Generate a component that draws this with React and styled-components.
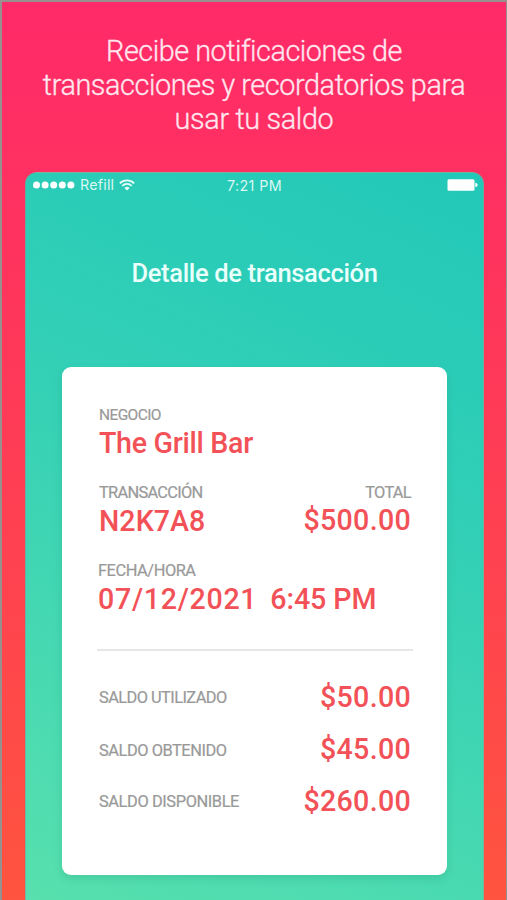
import React from "react";
import styled, { createGlobalStyle } from "styled-components";

const GlobalStyle = createGlobalStyle`
  * { box-sizing: border-box; }
  body { margin: 0; background: #ff5440; }
`;

const Screen = styled.main`
  display: flex;
  flex-direction: column;
  height: 900px;
  overflow: hidden;
  padding: 32px 22px 0 23px;
  border: solid #98908f;
  border-width: 2px 1px 0 2px;
  background: linear-gradient(180deg, #ff2a69 0%, #ff345d 30%, #ff434f 65%, #ff543f 100%);
  font-family: Roboto, "Noto Sans", sans-serif;
`;

const Headline = styled.h1`
  display: flex;
  flex-direction: column;
  align-items: center;
  margin: 0 0 36px;
  padding-right: 1px;
  font-size: 28.8px;
  font-weight: 300;
  line-height: 34px;
  color: #ffe6ee;
  -webkit-text-stroke: 0.3px #ffe6ee;
`;

const Line = styled.span`
  white-space: nowrap;
  letter-spacing: ${(p) => p.$spacing}px;
`;

const Phone = styled.section`
  display: flex;
  flex-direction: column;
  flex: 1;
  padding: 0 37px;
  border: solid rgba(150, 150, 140, 0.55);
  border-width: 1px 1px 0;
  border-radius: 12px 12px 0 0;
  background: linear-gradient(205deg, #22c8b8 0%, #33d0b6 42%, #58e0ae 100%);
`;

const StatusBar = styled.header`
  display: grid;
  grid-template-columns: 1fr auto 1fr;
  align-items: center;
  height: 26px;
  margin: 0 -32px 0 -30px;
  font: 400 14.3px/18px Inter, sans-serif;
  color: #d9f7f3;
`;

const Carrier = styled.div`
  display: flex;
  align-items: center;
  gap: 5px;
  height: 24px;
  margin-top: -2px;
  letter-spacing: 0.2px;
`;

const Clock = styled.time`
  margin: 0 2px 1px 0;
  letter-spacing: 0.4px;
`;

const Battery = styled.svg`
  justify-self: end;
  margin-top: -2px;
`;

const Title = styled.h2`
  margin: 59px 0 0;
  height: 30px;
  font-size: 25.5px;
  font-weight: 500;
  line-height: 30px;
  letter-spacing: -0.34px;
  text-align: center;
  white-space: nowrap;
  color: #e9fffb;
`;

const Card = styled.article`
  display: flex;
  flex-direction: column;
  height: 508px;
  margin: 79px -1px 0 -1px;
  padding: 38px 36px 0;
  border-radius: 9px;
  background: #fff;
  box-shadow: 0 4px 9px rgba(20, 120, 90, 0.18);
`;

const Fields = styled.div`
  display: flex;
  flex-direction: column;
  gap: 23px;
`;

const FieldRow = styled.div`
  display: flex;
  justify-content: space-between;
  height: 55px;
  padding-left: 1px;
`;

const Field = styled.div`
  display: flex;
  flex-direction: column;
  gap: ${(p) => p.$gap ?? 1}px;
  margin-left: ${(p) => p.$outset ?? 0}px;
  align-items: ${(p) => (p.$end ? "flex-end" : "flex-start")};
`;

const Label = styled.span`
  font-size: ${(p) => p.$size ?? 16.4}px;
  font-weight: 400;
  line-height: 20px;
  letter-spacing: ${(p) => p.$spacing ?? 0}px;
  white-space: nowrap;
  color: #999;
  -webkit-text-stroke: 0.2px #999;
`;

const Value = styled.span`
  display: flex;
  gap: 13px;
  font-size: 28.6px;
  font-weight: 500;
  line-height: 34px;
  letter-spacing: ${(p) => p.$spacing ?? 0.2}px;
  white-space: nowrap;
  color: #f25257;
`;

const Divider = styled.hr`
  width: 316px;
  height: 2px;
  margin: 33px 0 29px -1px;
  border: 0;
  background: #e6e6e6;
`;

const Balances = styled.div`
  display: flex;
  flex-direction: column;
  gap: 18px;
`;

const BalanceRow = styled.div`
  display: flex;
  justify-content: space-between;
  align-items: flex-start;
  height: 34px;
  padding-left: 1px;

  ${Label} {
    padding-top: ${(p) => p.$drop}px;
  }
`;

const balances = [
  { label: "SALDO UTILIZADO", value: "$50.00", spacing: -0.56, drop: 8 },
  { label: "SALDO OBTENIDO", value: "$45.00", spacing: -0.45, drop: 9 },
  { label: "SALDO DISPONIBLE", value: "$260.00", spacing: -0.4, drop: 8 },
];

function Signal() {
  return (
    <svg width="42" height="8" viewBox="0 0 42 8" fill="#fff">
      {[3.5, 12.1, 20.7, 29.3, 37.9].map((x) => (
        <circle key={x} cx={x} cy="4" r="3.5" />
      ))}
    </svg>
  );
}

function Wifi() {
  return (
    <svg width="16" height="12" viewBox="0 0 16 12" fill="none" stroke="#e8fbf9" strokeWidth="1.8">
      <path d="M0.8 4.3a10.3 10.3 0 0 1 14.4 0" />
      <path d="M3.3 6.9a6.7 6.7 0 0 1 9.4 0" />
      <path d="M8 11.6L5.4 9a3.8 3.8 0 0 1 5.2 0z" fill="#e8fbf9" stroke="none" />
    </svg>
  );
}

export default function App() {
  return (
    <>
      <GlobalStyle />
      <Screen>
        <Headline>
          <Line $spacing={-0.47}>Recibe notificaciones de</Line>
          <Line $spacing={-0.41}>transacciones y recordatorios para</Line>
          <Line $spacing={-0.35}>usar tu saldo</Line>
        </Headline>
        <Phone>
          <StatusBar>
            <Carrier>
              <Signal />
              <span>Refill</span>
              <Wifi />
            </Carrier>
            <Clock>7:21 PM</Clock>
            <Battery width="31" height="12" viewBox="0 0 31 12" fill="#fff">
              <rect x="0.5" y="0.3" width="27" height="11.4" rx="1.5" />
              <path d="M28.3 3.8c1.7.4 2.3 1.2 2.3 2.2s-.6 1.8-2.3 2.2z" />
            </Battery>
          </StatusBar>
          <Title>Detalle de transacción</Title>
          <Card>
            <Fields>
              <FieldRow>
                <Field>
                  <Label $size={15.5} $spacing={-0.6}>NEGOCIO</Label>
                  <Value $spacing={-0.3}>The Grill Bar</Value>
                </Field>
              </FieldRow>
              <FieldRow>
                <Field>
                  <Label $spacing={-0.72}>TRANSACCIÓN</Label>
                  <Value $spacing={0.05}>N2K7A8</Value>
                </Field>
                <Field $end $gap={0}>
                  <Label $spacing={-0.7}>TOTAL</Label>
                  <Value $spacing={0.3}>$500.00</Value>
                </Field>
              </FieldRow>
              <FieldRow>
                <Field $gap={1} $outset={-1}>
                  <Label $spacing={-0.45}>FECHA/HORA</Label>
                  <Value $spacing={0.7}>
                    <span>07/12/2021</span>
                    <Line $spacing={-0.1}>6:45 PM</Line>
                  </Value>
                </Field>
              </FieldRow>
            </Fields>
            <Divider />
            <Balances>
              {balances.map((b) => (
                <BalanceRow key={b.label} $drop={b.drop}>
                  <Label $spacing={b.spacing}>{b.label}</Label>
                  <Value $spacing={0.3}>{b.value}</Value>
                </BalanceRow>
              ))}
            </Balances>
          </Card>
        </Phone>
      </Screen>
    </>
  );
}
